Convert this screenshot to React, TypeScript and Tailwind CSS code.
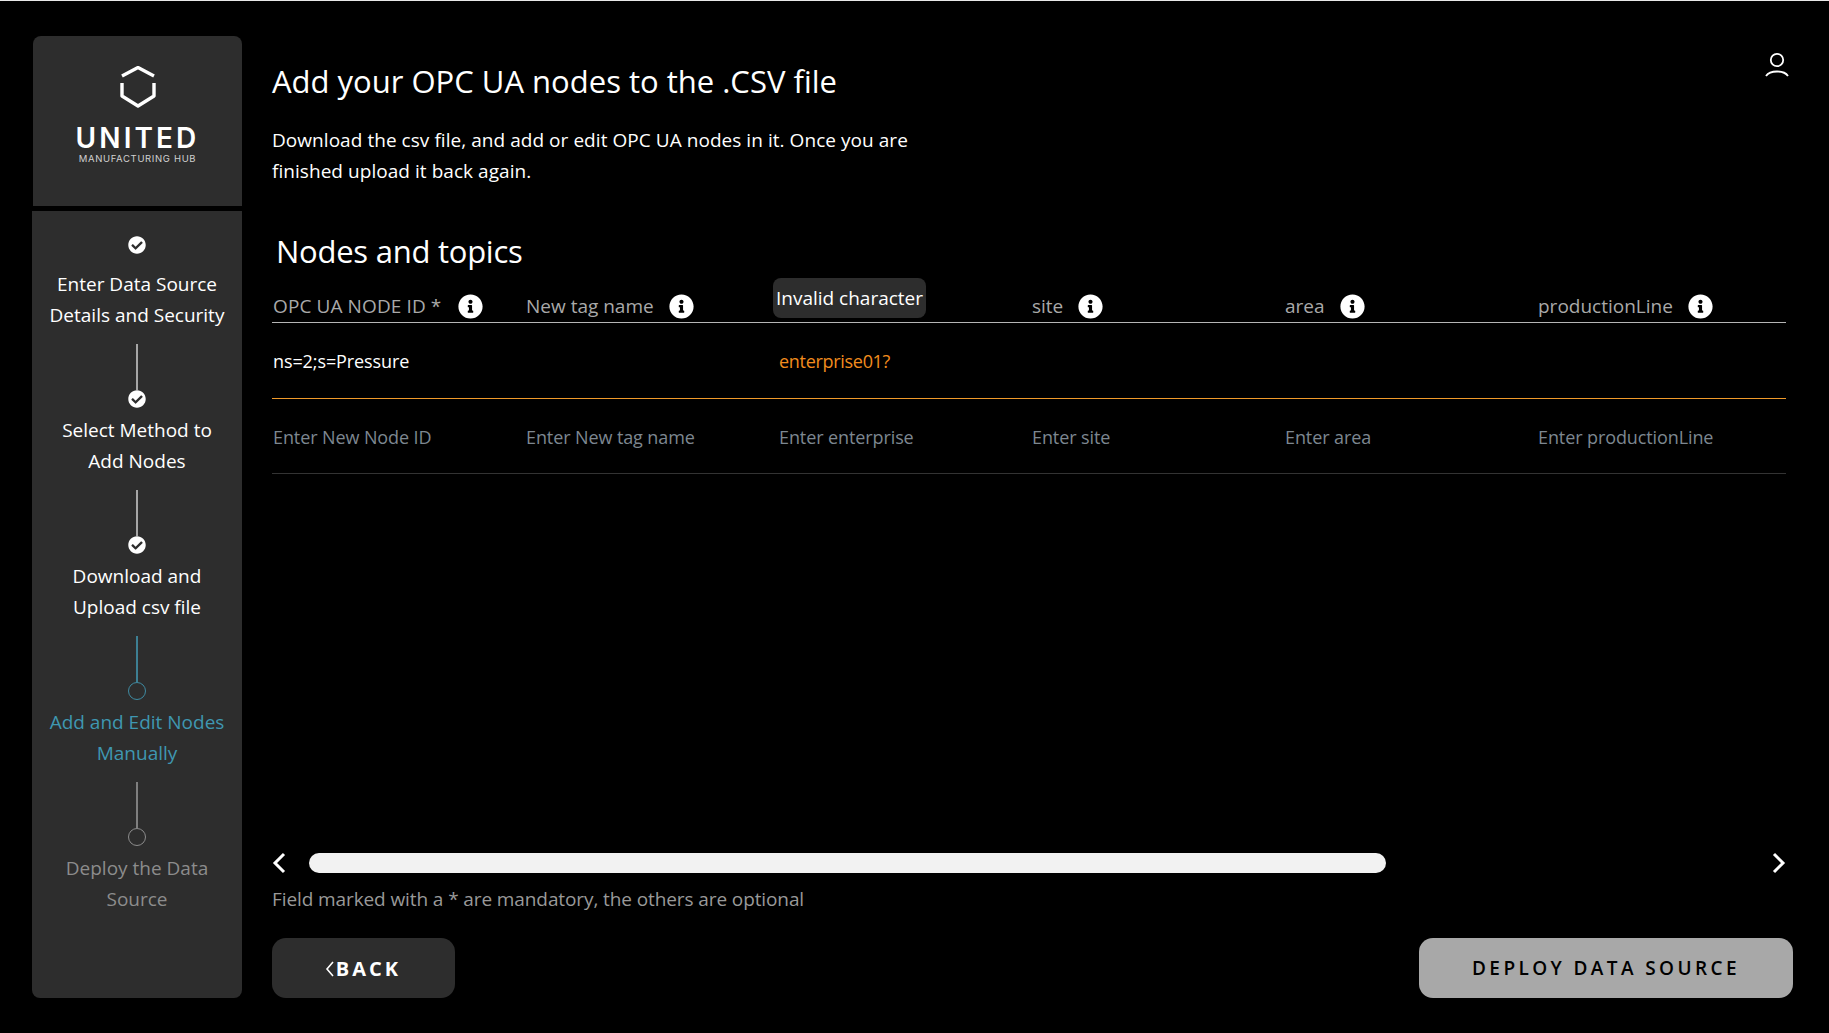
import { FaCheckCircle, FaInfoCircle } from "react-icons/fa";

const steps = [
  { a: "Enter Data Source", b: "Details and Security", state: "done" },
  { a: "Select Method to", b: "Add Nodes", state: "done" },
  { a: "Download and", b: "Upload csv file", state: "done" },
  { a: "Add and Edit Nodes", b: "Manually", state: "active" },
  { a: "Deploy the Data", b: "Source", state: "todo" },
];

const headers = [
  { t: "OPC UA NODE ID *", icon: true },
  { t: "New tag name", icon: true },
  { t: "enterprise tag", icon: false },
  { t: "site", icon: true },
  { t: "area", icon: true },
  { t: "productionLine", icon: true },
];

const placeholders = ["Enter New Node ID", "Enter New tag name", "Enter enterprise", "Enter site", "Enter area", "Enter productionLine"];

function Step({ s, first }: { s: (typeof steps)[number]; first: boolean }) {
  const text = s.state === "done" ? "text-white" : s.state === "active" ? "text-[#3f97b1]" : "text-[#8c8c8c]";
  const line = s.state === "done" ? "bg-[#a6a6a6]" : s.state === "active" ? "bg-[#3d7f93]" : "bg-[#7f7f7f]";
  const ring = s.state === "active" ? "border-[#3f8ba2]" : "border-[#8c8c8c]";
  return (
    <div className="flex flex-col items-center">
      {!first && <div className={`h-[46px] w-[2px] ${line}`} />}
      {s.state === "done" ? (
        <FaCheckCircle className="h-[18px] w-[18px] text-white" />
      ) : (
        <div className={`h-[18px] w-[18px] rounded-full border ${ring}`} />
      )}
      <div className={`${first ? "mt-[15px]" : "mt-[7px]"} mb-[14px] text-center text-[19px] leading-[30.5px] ${text}`}>
        <div>{s.a}</div>
        <div>{s.b}</div>
      </div>
    </div>
  );
}

export default function App() {
  return (
    <div className="flex h-[1033px] w-full border-t border-[#e8e8e8] bg-black pb-[35px] pl-[32px] pr-[36px] pt-[35px] font-['Open_Sans','Liberation_Sans',sans-serif] text-white">
      <aside className="flex w-[210px] shrink-0 flex-col gap-[5px]">
        <div className="ml-px flex h-[170px] flex-col items-center rounded-t-[8px] bg-[#2d2d2d] pt-[30px]">
          <svg width="36" height="42" viewBox="0 0 36 42" fill="none" stroke="white" strokeWidth="3.4" strokeLinejoin="round">
            <path d="M2 10 L18 1.5 L34 10" />
            <path d="M2 17 V30 L18 40 L34 30 V17" />
          </svg>
          <div className="mt-[18px] font-['Inter',sans-serif] text-[28px] font-semibold leading-[24px] tracking-[3.1px] text-white">UNITED</div>
          <div className="mt-[3px] whitespace-nowrap font-['Inter',sans-serif] text-[9.5px] leading-[12px] tracking-[0.65px] text-[#d0d0d0]">MANUFACTURING HUB</div>
        </div>
        <div className="flex flex-1 flex-col rounded-b-[8px] bg-[#2d2d2d] pt-[25px]">
          {steps.map((s, i) => (
            <Step key={s.a} s={s} first={i === 0} />
          ))}
        </div>
      </aside>

      <main className="ml-[30px] flex min-w-0 flex-1 flex-col">
        <div className="flex items-start justify-between">
          <h1 className="mt-[25px] text-[31px] font-normal leading-[40px]">Add your OPC UA nodes to the .CSV file</h1>
          <svg className="mr-[3px] mt-[15px]" width="26" height="28" viewBox="0 0 26 28" fill="none" stroke="white" strokeWidth="1.8">
            <circle cx="13" cy="9" r="6.2" />
            <path d="M2 25 C6 19 20 19 24 25" />
          </svg>
        </div>
        <p className="mt-[24px] text-[19px] leading-[30.5px] tracking-[0.05px]">
          Download the csv file, and add or edit OPC UA nodes in it. Once you are
          <br />
          finished upload it back again.
        </p>
        <h2 className="ml-[4px] mt-[45px] text-[31px] font-normal leading-[40px] tracking-[-0.25px]">Nodes and topics</h2>

        <div className="relative mr-[7px] mt-[2px] text-[18px]">
          <div className="grid h-[50px] grid-cols-[repeat(5,253px)_1fr] items-center border-b border-[#b5b5b5] pl-[1px] pt-[18px] text-[19px] text-[#a9a9a9]">
            {headers.map((h, i) => (
              <div key={h.t} className={`flex items-center whitespace-nowrap ${i === 0 ? "gap-[17px] tracking-[0.1px]" : "gap-[15px]"}`}>
                <span>{h.t}</span>
                {h.icon && <FaInfoCircle className="h-[25px] w-[25px] text-white" />}
              </div>
            ))}
          </div>
          <div className="grid h-[76px] grid-cols-[repeat(5,253px)_1fr] items-center border-b border-[#f09a2a] pl-[1px] pt-[2px]">
            <div className="tracking-[-0.1px]">ns=2;s=Pressure</div>
            <div />
            <div className="tracking-[-0.3px] text-[#f28c1e]">enterprise01?</div>
          </div>
          <div className="grid h-[75px] grid-cols-[repeat(5,253px)_1fr] items-center border-b border-[#333333] pl-[1px] pt-[2px] tracking-[-0.1px] text-[#7d8790]">
            {placeholders.map((p) => (
              <div key={p}>{p}</div>
            ))}
          </div>
          <div className="absolute left-[501px] top-[5px] flex h-[40px] w-[153px] items-center justify-center whitespace-nowrap rounded-[8px] bg-[#2d2d2d] text-[19px] text-white">
            Invalid character
          </div>
        </div>

        <div className="mt-auto mr-[7px] flex h-[20px] items-center">
          <svg width="14" height="22" viewBox="0 0 14 22" fill="none" stroke="white" strokeWidth="3">
            <path d="M12 2 L3 11 L12 20" />
          </svg>
          <div className="ml-[23px] h-[20px] w-[1077px] rounded-full bg-[#f2f2f2]" />
          <svg className="ml-auto" width="14" height="22" viewBox="0 0 14 22" fill="none" stroke="white" strokeWidth="3">
            <path d="M2 2 L11 11 L2 20" />
          </svg>
        </div>
        <div className="mt-[11px] text-[19px] leading-[30px] tracking-[-0.1px] text-[#999999]">Field marked with a * are mandatory, the others are optional</div>
        <div className="mt-[24px] flex justify-between">
          <div className="flex h-[60px] w-[183px] items-center justify-center gap-[2px] rounded-[14px] bg-[#2d2d2d] pr-[1px] pt-px text-[20px] font-bold tracking-[3px]">
            <svg width="9" height="18" viewBox="0 0 9 18" fill="none" stroke="white" strokeWidth="1.6">
              <path d="M8 2 L2 9 L8 16" />
            </svg>
            BACK
          </div>
          <div className="flex h-[60px] w-[374px] items-center justify-center rounded-[14px] bg-[#a8a8a8] pt-px text-[19px] font-semibold tracking-[3.4px] text-black">
            DEPLOY DATA SOURCE
          </div>
        </div>
      </main>
    </div>
  );
}
